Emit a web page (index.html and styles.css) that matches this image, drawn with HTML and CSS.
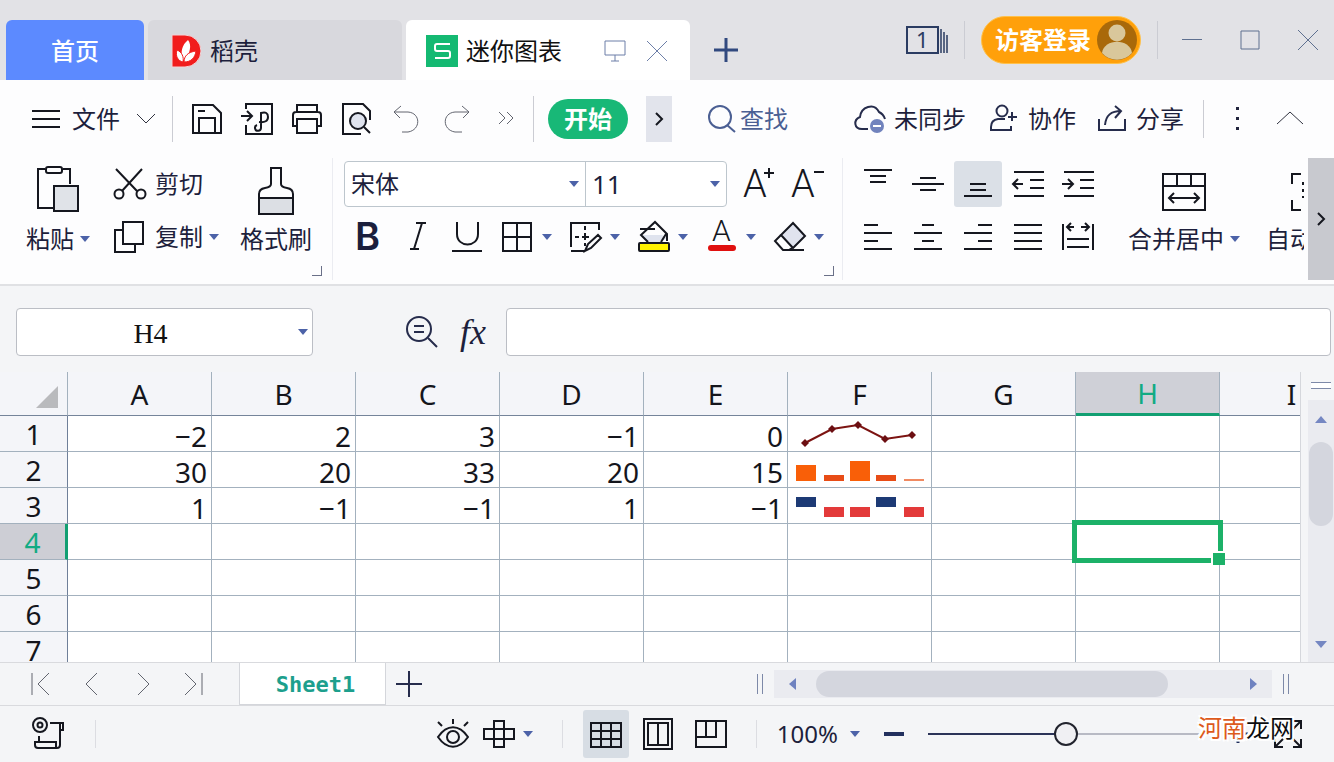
FILE: index.html
```html
<!DOCTYPE html>
<html lang="zh-CN">
<head>
<meta charset="utf-8">
<title>迷你图表</title>
<link rel="stylesheet" href="styles.css">
</head>
<body>
<svg class="defs" aria-hidden="true">
  <symbol id="caret" viewBox="0 0 10 6"><path d="M0 0h10L5 6z" fill="#4c62a8"/></symbol>
</svg>
<div class="app">

<header class="titlebar">
  <nav class="tabs">
    <button class="tab tab-home">首页</button>
    <button class="tab tab-docer">
      <svg width="32" height="34" viewBox="0 0 32 34"><path d="M1 1h13a16 16 0 0 1 0 32H1z" fill="#f11c1c" stroke="#f3d3d6"/><path d="M12 26C9 18 11 11 17 6c4 5 2 13-3 20z" fill="#fff"/><path d="M12 28c-5-1-8-6-6-12 5 2 7 7 6 12zM13 28c0-6 4-10 12-11-1 7-5 11-12 11z" fill="#fff" stroke="#f11c1c"/></svg>
      稻壳</button>
    <button class="tab tab-active">
      <svg width="32" height="32" viewBox="0 0 32 32"><path fill="#14b972" d="M0 0h32v32H0z"/><path d="M24 9H11q-2 0-2 2v3q0 2 2 2h11q2 0 2 2v3q0 2-2 2H9" fill="none" stroke="#fff" stroke-width="2"/></svg>
      <span class="tab-name">迷你图表</span>
      <svg class="line-blue" width="22" height="22" viewBox="0 0 22 22"><path d="M1 1h20v14H1zM11 15v6M7 21h8"/></svg>
      <svg class="line-blue" width="22" height="22" viewBox="0 0 22 22"><path d="M1 1l20 20M21 1L1 21"/></svg>
    </button>
  </nav>
  <button class="new-tab" aria-label="新建"><svg width="24" height="24" viewBox="0 0 24 24"><path d="M12 0v24M0 12h24" stroke="#31497f" stroke-width="3"/></svg></button>
  <div class="window-tools">
    <button class="win-count" aria-label="窗口"><svg width="42" height="28" viewBox="0 0 42 28"><path d="M1 1h31v26H1z" fill="none" stroke="#2b3c62" stroke-width="2"/><path d="M35 3v24M38 6v21M41 9v18" stroke="#2b3c62" stroke-width="1.500"/><text class="svg-num" x="10" y="22">1</text></svg></button>
    <span class="rule"></span>
    <button class="login">访客登录
      <svg width="40" height="40" viewBox="0 0 40 40"><circle cx="20" cy="20" r="20" fill="#a9690a"/><circle cx="20" cy="13" r="8.500" fill="#d9c79b"/><path d="M5 33c2-15 28-15 30 0a20 20 0 0 1-30 0z" fill="#d9c79b"/></svg>
    </button>
    <span class="rule"></span>
    <span class="win-buttons">
      <button aria-label="最小化"><svg class="line-win" width="20" height="20" viewBox="0 0 20 20"><path d="M0 9.500h20"/></svg></button>
      <button aria-label="最大化"><svg class="line-win" width="20" height="20" viewBox="0 0 20 20"><path d="M1 1h18v18H1z"/></svg></button>
      <button aria-label="关闭"><svg class="line-win" width="20" height="20" viewBox="0 0 20 20"><path d="M0 0l20 20M20 0L0 20"/></svg></button>
    </span>
  </div>
</header>

<div class="menubar">
  <button class="file-menu">
    <svg class="ink" width="28" height="20" viewBox="0 0 28 20"><path d="M0 2h28M0 10h28M0 18h28"/></svg>
    文件
    <svg class="thin dark" width="20" height="12" viewBox="0 0 20 12"><path d="M1 1l9 9 9-9"/></svg>
  </button>
  <span class="rule tall"></span>
  <div class="quick">
    <button aria-label="保存"><svg class="ink" width="32" height="32" viewBox="0 0 32 32"><path d="M2 2h20l8 8v20H2zM8 30V15h16v15M7 8h7"/></svg></button>
    <button aria-label="输出为PDF"><svg class="ink" width="32" height="32" viewBox="0 0 32 32"><path d="M5 6V1h26v30H5v-9M0 13h10M6 8l5 5-5 5M16 22a3 3 0 1 0 4 3V10q7-2 7 4t-9 5"/></svg></button>
    <button aria-label="打印"><svg class="ink" width="32" height="32" viewBox="0 0 32 32"><path d="M6 9V2h20v7M6 23H2V12q0-3 3-3h22q3 0 3 3v11h-4M6 16h20v14H6z"/></svg></button>
    <button aria-label="打印预览"><svg class="ink" width="32" height="32" viewBox="0 0 32 32"><circle cx="17" cy="18" r="8" fill="#dfe3ee"/><path d="M20 31H2V1h20l7 7v9M23 24l6 6"/></svg></button>
    <button aria-label="撤销"><svg class="thin" width="32" height="32" viewBox="0 0 32 32"><path d="M10 3L3 9l6 6M3 9h14c13 1 13 18 0 20h-6"/></svg></button>
    <button aria-label="恢复"><svg class="thin" width="32" height="32" viewBox="0 0 32 32"><path d="M21 3l7 6-6 6M28 9H14C1 10 1 27 14 29h7"/></svg></button>
    <button aria-label="更多"><svg class="thin" width="32" height="32" viewBox="0 0 32 32"><path d="M8 9l6 6-6 6M16 9l6 6-6 6"/></svg></button>
  </div>
  <span class="rule tall"></span>
  <button class="start">开始</button>
  <button class="next" aria-label="下一个"><svg class="ink" width="10" height="16" viewBox="0 0 10 16"><path d="M2 2l6 6-6 6"/></svg></button>
  <button class="find"><svg width="28" height="28" viewBox="0 0 28 28" fill="none" stroke="#4b5f93" stroke-width="2"><circle cx="12" cy="12" r="11"/><path d="M19 20l8 7"/></svg>查找</button>
  <div class="share-tools">
    <button class="sync"><svg class="navy" width="32" height="30" viewBox="0 0 32 30"><path d="M14 25H8C0 25-1 16 6 13 7 3 20-2 25 8c4 2 5 4 6 7"/><circle cx="23" cy="22" r="7" fill="#7183bd" stroke="none"/><path d="M19 22h8" stroke="#fff"/></svg>未同步</button>
    <button><svg class="navy" width="28" height="30" viewBox="0 0 28 30"><circle cx="12" cy="7" r="5.500"/><path d="M15 15H8q-7 1-7 8v3h20v-4M18 13h9M22 8v9"/></svg>协作</button>
    <button><svg class="navy" width="28" height="28" viewBox="0 0 28 28"><path d="M1 14v11h26V14M7 20C8 9 14 6 23 6M17 1l6 5-6 7"/></svg>分享</button>
  </div>
  <span class="rule"></span>
  <button class="dots" aria-label="更多选项"><svg width="4" height="24" viewBox="0 0 4 24" fill="#22253d"><path d="M0 0h3v3H0zM0 10h3v3H0zM0 20h3v3H0z"/></svg></button>
  <button class="fold" aria-label="收起"><svg class="thin dark" width="28" height="16" viewBox="0 0 28 16"><path d="M1 13L14 1l13 12"/></svg></button>
</div>

<div class="ribbon">
  <div class="ribbon-body">
    <button class="big">
      <svg class="ink" width="44" height="48" viewBox="0 0 44 48"><path d="M9 4H2v39h16M27 4h7v15"/><rect x="10" y="2" width="16" height="6" rx="2"/><path d="M18 21h24v25H18z" fill="#e0e3e8"/></svg>
      <span class="with-caret">粘贴<svg class="caret"><use href="#caret"/></svg></span>
    </button>
    <div class="rows clip">
      <button class="tool"><svg class="ink" width="34" height="32" viewBox="0 0 34 32"><path d="M3 1l21 22M29 1L9 23"/><circle cx="6" cy="26" r="4.500"/><circle cx="28" cy="26" r="4.500"/></svg>剪切</button>
      <button class="tool"><svg class="ink" width="34" height="34" viewBox="0 0 34 34"><path d="M10 2h20v22H10zM10 10H2v22h20v-8"/></svg><span class="with-caret">复制<svg class="caret"><use href="#caret"/></svg></span></button>
    </div>
    <button class="big brush">
      <svg class="ink" width="38" height="48" viewBox="0 0 38 48"><path d="M2 33h34v16H2z" fill="#dcdfe4"/><path d="M2 33v-4q0-5 6-6 6-1 6-4V3h10v16q0 3 6 4 6 1 6 6v4"/></svg>
      格式刷
    </button>
    <span class="corner"></span>
    <span class="divider"></span>
    <div class="rows font">
      <div class="line">
        <div class="font-box">
          <label class="pick family"><select aria-label="字体"><option>宋体</option></select><svg class="caret"><use href="#caret"/></svg></label>
          <label class="pick size"><select aria-label="字号"><option>11</option></select><svg class="caret"><use href="#caret"/></svg></label>
        </div>
        <button aria-label="增大字号"><svg class="ink" width="32" height="32" viewBox="0 0 32 32"><text class="svg-a" x="0" y="29">A</text><path d="M21 5h10M26 0v10"/></svg></button>
        <button aria-label="减小字号"><svg class="ink" width="32" height="32" viewBox="0 0 32 32"><text class="svg-a" x="0" y="29">A</text><path d="M23 4h10"/></svg></button>
      </div>
      <div class="line formats">
        <button aria-label="加粗"><svg width="32" height="32" viewBox="0 0 32 32"><text class="svg-b" x="3" y="29">B</text></svg></button>
        <button aria-label="倾斜"><svg class="ink" width="32" height="32" viewBox="0 0 32 32"><path d="M14 2h10M8 28h9M20 2l-8 26"/></svg></button>
        <button aria-label="下划线"><svg class="ink" width="32" height="32" viewBox="0 0 32 32"><path d="M5 1v12c0 14 21 14 21 0V1M0 30h30"/></svg></button>
        <button class="combo" aria-label="边框"><svg class="ink" width="32" height="32" viewBox="0 0 32 32"><path d="M1 2h28v28H1zM15 2v28M1 16h28"/></svg><svg class="caret"><use href="#caret"/></svg></button>
        <button class="combo" aria-label="绘图边框"><svg class="ink" width="32" height="32" viewBox="0 0 32 32"><path d="M29 9V2H1v24M1 30h15M5 16h4M12 16h7M15 5v4M15 12v7M15 22v3M15 30l3-7 10-9 3 3-10 10z"/></svg><svg class="caret"><use href="#caret"/></svg></button>
        <button class="combo" aria-label="填充颜色"><svg class="ink" width="32" height="32" viewBox="0 0 32 32"><path d="M9 21h14l6-4-5-3H4z" fill="#dfe3ee" stroke="none"/><path d="M29 20v-7L17 1 3 14l7 7M23 21l5-8M2 8h15"/><rect x="1" y="22" width="30" height="8" rx="1" fill="#fff200"/></svg><svg class="caret"><use href="#caret"/></svg></button>
        <button class="combo" aria-label="字体颜色"><svg width="32" height="32" viewBox="0 0 32 32"><text class="svg-a small" x="6" y="20">A</text><path d="M5 27h22" stroke="#e0100f" stroke-width="6" stroke-linecap="round"/></svg><svg class="caret"><use href="#caret"/></svg></button>
        <button class="combo" aria-label="清除"><svg class="ink" width="32" height="32" viewBox="0 0 32 32"><path d="M19 2l12 13-12 12L7 14z" fill="#e0e3ee"/><path d="M7 14l-6 6 8 9h21M18 27l-3 2"/></svg><svg class="caret"><use href="#caret"/></svg></button>
      </div>
    </div>
    <span class="corner"></span>
    <span class="divider near"></span>
    <div class="aligns">
      <button aria-label="顶端对齐"><svg class="ink" width="32" height="32" viewBox="0 0 32 32"><path d="M2 2h28M8 8h16M8 14h16"/></svg></button>
      <button aria-label="垂直居中"><svg class="ink" width="32" height="32" viewBox="0 0 32 32"><path d="M8 10h16M0 16h32M8 22h16"/></svg></button>
      <button class="on" aria-label="底端对齐"><svg class="ink" width="32" height="32" viewBox="0 0 32 32"><path d="M8 16h16M8 22h16M2 28h28"/></svg></button>
      <button aria-label="减少缩进"><svg class="ink" width="32" height="32" viewBox="0 0 32 32"><path d="M2 4h30M18 12h14M18 20h14M2 28h30M1 16h10M6 11l-5 5 5 5"/></svg></button>
      <button aria-label="增加缩进"><svg class="ink" width="32" height="32" viewBox="0 0 32 32"><path d="M2 4h30M18 12h14M18 20h14M2 28h30M0 16h10M6 11l5 5-5 5"/></svg></button>
      <button aria-label="左对齐"><svg class="ink" width="32" height="32" viewBox="0 0 32 32"><path d="M2 4h14M2 12h28M2 20h14M2 28h28"/></svg></button>
      <button aria-label="水平居中"><svg class="ink" width="32" height="32" viewBox="0 0 32 32"><path d="M10 4h12M2 12h28M10 20h12M2 28h28"/></svg></button>
      <button aria-label="右对齐"><svg class="ink" width="32" height="32" viewBox="0 0 32 32"><path d="M16 4h14M2 12h28M16 20h14M2 28h28"/></svg></button>
      <button aria-label="两端对齐"><svg class="ink" width="32" height="32" viewBox="0 0 32 32"><path d="M2 4h28M2 12h28M2 20h28M2 28h28"/></svg></button>
      <button aria-label="分散对齐"><svg class="ink" width="32" height="32" viewBox="0 0 32 32"><path d="M1 3v26M31 3v26M5 18h22M5 26h22M5 6h7M9 2L5 6l4 4M19 6h8M23 2l4 4-4 4"/></svg></button>
    </div>
    <button class="big merge">
      <svg class="ink" width="44" height="48" viewBox="0 0 44 48"><path d="M1 9h42v36H1zM1 21h42M15 9v12M29 9v12M8 33h28M12 28l-5 5 5 5M32 28l5 5-5 5"/></svg>
      <span class="with-caret">合并居中<svg class="caret"><use href="#caret"/></svg></span>
    </button>
    <button class="big wrap">
      <svg class="ink" width="48" height="48" viewBox="0 0 48 48"><path d="M11 9H2v10M2 35v10h9M37 9h9v10M46 35v10h-9"/><path d="M13 17v16M34 17v16" stroke-dasharray="3 4"/></svg>
      自动换行
    </button>
  </div>
  <button class="ribbon-next" aria-label="向右滚动"><svg class="ink" width="10" height="16" viewBox="0 0 10 16"><path d="M2 2l6 6-6 6"/></svg></button>
</div>

<div class="formula">
  <div class="name-box"><input type="text" value="H4" aria-label="名称框"><svg class="caret"><use href="#caret"/></svg></div>
  <button aria-label="浏览公式"><svg class="navy" width="32" height="34" viewBox="0 0 32 34"><circle cx="13" cy="14" r="12"/><path d="M8 11h10M8 17h10M22 23l9 9"/></svg></button>
  <button class="fx" aria-label="插入函数">fx</button>
  <input class="formula-input" type="text" aria-label="编辑栏">
</div>

<main class="sheet">
  <div class="grid">
    <table>
      <colgroup><col class="col-head"><col><col><col><col><col><col><col><col><col></colgroup>
      <thead>
        <tr><th class="all"><svg width="22" height="22" viewBox="0 0 22 22"><path d="M22 0v22H0z" fill="#b9babd"/></svg></th><th>A</th><th>B</th><th>C</th><th>D</th><th>E</th><th>F</th><th>G</th><th class="picked">H</th><th>I</th></tr>
      </thead>
      <tbody>
        <tr><th>1</th><td>−2</td><td>2</td><td>3</td><td>−1</td><td>0</td>
          <td class="spark"><svg width="134" height="30" viewBox="0 0 134 30"><path d="M13 24l27-14 26-4 27 14 27-4" fill="none" stroke="#7c1412" stroke-width="2"/><path d="M13 20l4 4-4 4-4-4zM40 6l4 4-4 4-4-4zM66 2l4 4-4 4-4-4zM93 16l4 4-4 4-4-4zM120 12l4 4-4 4-4-4z" fill="#6c0f12"/></svg></td><td></td><td></td><td></td></tr>
        <tr><th>2</th><td>30</td><td>20</td><td>33</td><td>20</td><td>15</td>
          <td class="spark"><svg width="134" height="30" viewBox="0 0 134 30"><path d="M4 10h20v16H4zM58 6h20v20H58z" fill="#f95f08"/><path d="M32 20h20v6H32zM84 20h20v6H84z" fill="#e84c16"/><path d="M112 24h20v2h-20z" fill="#f08a62"/></svg></td><td></td><td></td><td></td></tr>
        <tr><th>3</th><td>1</td><td>−1</td><td>−1</td><td>1</td><td>−1</td>
          <td class="spark"><svg width="134" height="30" viewBox="0 0 134 30"><path d="M4 6h20v10H4zM84 6h20v10H84z" fill="#1d3a75"/><path d="M32 16h20v10H32zM58 16h20v10H58zM112 16h20v10h-20z" fill="#e33a3a"/></svg></td><td></td><td></td><td></td></tr>
        <tr><th class="picked">4</th><td></td><td></td><td></td><td></td><td></td><td></td><td></td><td class="current"></td><td></td></tr>
        <tr><th>5</th><td></td><td></td><td></td><td></td><td></td><td></td><td></td><td></td><td></td></tr>
        <tr><th>6</th><td></td><td></td><td></td><td></td><td></td><td></td><td></td><td></td><td></td></tr>
        <tr><th>7</th><td></td><td></td><td></td><td></td><td></td><td></td><td></td><td></td><td></td></tr>
      </tbody>
    </table>
  </div>
  <div class="vscroll">
    <span class="split-h"></span>
    <div class="vtrack">
      <svg width="12" height="7" viewBox="0 0 12 7"><path d="M0 7h12L6 0z" fill="#7587c2"/></svg>
      <span class="vthumb"></span>
      <svg class="down" width="12" height="7" viewBox="0 0 12 7"><path d="M0 0h12L6 7z" fill="#7587c2"/></svg>
    </div>
  </div>
</main>

<div class="sheet-tabs">
  <div class="sheet-nav">
    <button aria-label="第一张"><svg class="thin" width="22" height="26" viewBox="0 0 22 26"><path d="M2 2v22M19 2L8 13l11 11"/></svg></button>
    <button aria-label="上一张"><svg class="thin" width="22" height="26" viewBox="0 0 22 26"><path d="M16 2L5 13l11 11"/></svg></button>
    <button aria-label="下一张"><svg class="thin" width="22" height="26" viewBox="0 0 22 26"><path d="M6 2l11 11L6 24"/></svg></button>
    <button aria-label="最后一张"><svg class="thin" width="22" height="26" viewBox="0 0 22 26"><path d="M2 2l11 11L2 24M19 2v22"/></svg></button>
  </div>
  <button class="sheet-tab">Sheet1</button>
  <button class="add-sheet" aria-label="新建工作表"><svg class="navy" width="26" height="26" viewBox="0 0 26 26"><path d="M13 0v26M0 13h26"/></svg></button>
  <div class="hscroll">
    <span class="split-v"></span>
    <div class="htrack">
      <svg width="7" height="12" viewBox="0 0 7 12"><path d="M7 0v12L0 6z" fill="#6f82c0"/></svg>
      <span class="hthumb"></span>
      <svg width="7" height="12" viewBox="0 0 7 12"><path d="M0 0v12l7-6z" fill="#6f82c0"/></svg>
    </div>
    <span class="split-v"></span>
  </div>
</div>

<footer class="status">
  <button aria-label="宏"><svg class="ink" width="34" height="34" viewBox="0 0 34 34"><circle cx="8" cy="8" r="7"/><circle cx="8" cy="8" r="2.500"/><path d="M18 6h13v7h-3M28 6v22q0 3-3 3H6q-3 0-3-3v-3h21v6M7 25v-6"/></svg></button>
  <span class="rule status-rule"></span>
  <div class="views">
    <button aria-label="护眼模式"><svg class="ink" width="32" height="32" viewBox="0 0 32 32"><path d="M1 19c9-13 21-13 30 0-9 13-21 13-30 0z"/><circle cx="16" cy="19" r="6"/><path d="M16 1v5M1 4l4 4M31 4l-4 4"/></svg></button>
    <button class="combo" aria-label="阅读模式"><svg class="ink" width="32" height="32" viewBox="0 0 32 32"><path d="M11 3h10v26H11zM1 11h30v10H1z"/></svg><svg class="caret"><use href="#caret"/></svg></button>
    <span class="rule"></span>
    <button class="view-on" aria-label="普通视图"><svg class="ink" width="32" height="32" viewBox="0 0 32 32"><path d="M1 5h30v24H1zM1 13h30M1 21h30M11 5v24M21 5v24"/></svg></button>
    <button aria-label="页面布局"><svg class="ink" width="32" height="32" viewBox="0 0 32 32"><path d="M1 1h28v30H1zM5 5h20v22H5zM15 5v22"/></svg></button>
    <button class="view-break" aria-label="分页预览"><svg class="ink" width="32" height="32" viewBox="0 0 32 32"><path d="M1 3h30v26H1zM1 19h20V3M11 3v16"/></svg></button>
    <span class="rule"></span>
    <button class="zoom">100%<svg class="caret"><use href="#caret"/></svg></button>
    <button aria-label="缩小"><svg width="20" height="4" viewBox="0 0 20 4"><path d="M0 0h20v4H0z" fill="#22305e"/></svg></button>
  </div>
  <input class="slider" type="range" min="0" max="100" value="50" aria-label="缩放">
  <div class="status-end">
    <button class="zoom-in" aria-label="放大"><svg width="20" height="20" viewBox="0 0 20 20"><path d="M10 0v19M0 10h20" stroke="#22305e" stroke-width="3"/></svg></button>
    <button aria-label="全屏"><svg class="ink" width="28" height="28" viewBox="0 0 28 28"><path d="M19 1h8v8M27 1l-8 8M9 27H1v-8M1 27l8-8M19 27h8v-8M27 27l-8-8"/></svg></button>
    <span class="mark"><span class="mark-warm">河南</span>龙网</span>
  </div>
</footer>
</div>
</body>
</html>
```
FILE: styles.css
```css
* { box-sizing: border-box; }

body {
  margin: 0;
  background: #f4f5f7;
  color: #1d1f3c;
  font-family: "Noto Sans", "Noto Sans CJK SC", sans-serif;
  font-size: 24px;
  line-height: 32px;
}

button, input, select { font: inherit; color: inherit; }

button {
  display: flex;
  align-items: center;
  justify-content: center;
  flex: none;
  margin: 0;
  padding: 0;
  border: 0;
  background: none;
  white-space: nowrap;
}

svg { display: block; flex: none; overflow: visible; }
.defs { display: none; }
.caret { width: 10px; height: 6px; }
.ink { fill: none; stroke: #15171f; stroke-width: 2; }
.navy { fill: none; stroke: #262c4c; stroke-width: 2; }
.thin { fill: none; stroke: #62656f; stroke-width: 1; }
.dark { stroke: #30323f; }
.line-blue { fill: none; stroke: #6d7fa8; stroke-width: 1; }
.line-win { fill: none; stroke: #5e7090; stroke-width: 1; }
.svg-num { font-size: 22px; fill: #2b3c62; }
.svg-a { font-family: Roboto, sans-serif; font-size: 38px; font-weight: 300; fill: #15171f; stroke: none; }
.small { font-size: 30px; }
.svg-b { font-family: Inter, sans-serif; font-size: 38px; font-weight: 600; fill: #1b1f3c; }

.rule { flex: none; width: 1px; height: 38px; background: #cbccd3; }
.tall { height: 46px; }

.app { display: flex; flex-direction: column; height: 100vh; overflow: hidden; }

/* Title bar */
.titlebar { display: flex; align-items: flex-end; flex: none; height: 80px; padding: 0 16px 0 6px; background: #e2e2e6; }
.tabs { display: flex; gap: 4px; }
.tab { height: 60px; padding-top: 2px; border-radius: 6px 6px 0 0; }
.tab-home { width: 138px; background: #5c8aff; color: #fff; font-weight: 500; }
.tab-docer { width: 254px; padding-left: 23px; gap: 7px; justify-content: flex-start; background: #d8d8dd; }
.tab-active { width: 284px; padding-right: 22px; padding-left: 20px; gap: 8px; background: #fff; color: #111; }
.tab-name { flex: 1; text-align: left; }
.tab-active .line-blue + .line-blue { margin-left: 12px; }
.new-tab { height: 60px; margin-left: 24px; }
.window-tools { display: flex; align-items: center; height: 80px; margin-left: auto; gap: 16px; }
.win-buttons { display: flex; gap: 38px; margin-left: 8px; }
.login { width: 160px; height: 48px; gap: 6px; justify-content: flex-end; padding-right: 3px; border-radius: 24px; border: 1px solid #ffc14a; background: #ffa00a; color: #fff; font-weight: 700; }

/* Menu bar */
.menubar { display: flex; align-items: center; flex: none; height: 78px; padding: 0 30px 0 32px; background: #fdfdfe; }
.file-menu { gap: 12px; margin-right: 16px; }
.file-menu .thin { margin-left: 4px; }
.quick { display: flex; gap: 18px; margin: 0 10px 0 18px; }
.start { width: 80px; height: 40px; margin: 0 18px 0 14px; border-radius: 20px; background: #18b877; color: #fff; font-weight: 700; }
.next { width: 26px; height: 46px; background: #e2e4ec; }
.find { gap: 4px; margin-left: 36px; color: #4b5f93; }
.share-tools { display: flex; gap: 22px; margin: 0 19px 0 auto; }
.share-tools button { gap: 10px; }
.share-tools .sync { gap: 8px; margin-right: 2px; }
.dots { margin-left: 32px; }
.fold { margin-left: 36px; }

/* Ribbon */
.ribbon { display: flex; flex: none; height: 128px; background: #fdfdfe; border-bottom: 2px solid #e0e1e4; }
.ribbon-body { display: flex; flex: 1; min-width: 0; overflow: hidden; margin-right: 4px; padding-left: 26px; }
.ribbon-body > * { flex: none; }
.ribbon-next { width: 26px; height: 122px; background: #c8c9cf; }
.big { flex-direction: column; justify-content: flex-start; gap: 10px; padding-top: 7px; align-self: flex-start; }
.with-caret { display: flex; align-items: center; gap: 6px; }
.rows { display: flex; flex-direction: column; gap: 7px; padding-top: 3px; }
.clip { align-items: flex-start; margin: 0 21px 0 23px; }
.tool { height: 46px; gap: 8px; }
.corner { width: 10px; height: 10px; align-self: flex-end; margin-bottom: 8px; border: solid #6a7088; border-width: 0 1px 1px 0; }
.divider { width: 1px; height: 122px; margin: 0 11px 0 10px; background: #ebecf1; }
.near { margin-left: 8px; }
.line { display: flex; align-items: center; height: 46px; gap: 16px; }
.formats { gap: 18px; padding-left: 8px; }
.combo { gap: 8px; }
.font-box { display: flex; width: 383px; height: 46px; border: 1px solid #bdc6cd; border-radius: 4px; background: #fff; }
.pick { position: relative; display: flex; align-items: center; }
.pick select { width: 100%; height: 44px; padding: 0 6px; border: 0; background: none; appearance: none; }
.pick .caret { position: absolute; right: 6px; pointer-events: none; }
.family { flex: 1; border-right: 1px solid #bdc6cd; }
.size { width: 140px; font-size: 26px; }
.aligns { display: grid; grid-template-columns: repeat(5, 48px); grid-auto-rows: 46px; gap: 7px 2px; align-content: start; padding-top: 3px; }
.aligns .on { background: #dbe0e7; border-radius: 3px; }
.merge, .wrap { margin-left: 26px; }

/* Formula bar */
.formula { display: flex; align-items: center; flex: none; height: 86px; padding: 6px 3px 0 16px; background: #f4f5f7; }
.name-box { position: relative; display: flex; align-items: center; width: 297px; margin-right: 93px; }
.name-box input { width: 100%; height: 48px; padding: 4px 32px 0 4px; border: 1px solid #bbbec5; border-radius: 4px; background: #fff; color: #111; font-family: "Liberation Serif", serif; font-size: 28px; text-align: center; }
.name-box .caret { position: absolute; right: 5px; }
.fx { width: 32px; margin: 0 17px 0 19px; font-family: "Liberation Serif", serif; font-size: 36px; font-style: italic; }
.formula-input { flex: 1; min-width: 0; height: 48px; padding: 0 8px; border: 1px solid #bbbec5; border-radius: 4px; background: #fff; }

/* Sheet */
.sheet { display: flex; flex: 1; min-height: 0; }
.grid { flex: 1; min-width: 0; overflow: hidden; border-right: 1px solid #d5d7dc; background: #fff; }
table { width: 1364px; table-layout: fixed; border-collapse: separate; border-spacing: 0; color: #14151c; font-size: 28px; line-height: 30px; }
col { width: 144px; }
.col-head { width: 68px; }
th { height: 36px; padding: 0; font-weight: 400; background: #f4f5f9; border: solid #a3b1be; border-width: 0 1px 1px 0; }
thead th { height: 44px; border-bottom-color: #75849a; }
tbody th { border-right-color: #6f7f99; }
.all svg { margin: 6px 0 0 36px; }
td { height: 36px; padding: 4px 4px 0 0; text-align: right; border: solid #a3b1be; border-width: 0 1px 1px 0; }
td.spark { padding: 0 0 0 4px; }
thead .picked { background: #cfd0d7; color: #12ab83; border-bottom: 3px solid #129f72; }
tbody .picked { background: #cdced5; color: #12ab83; border-right: 3px solid #129f72; }
.current { position: relative; }
.current::before { content: ""; position: absolute; inset: -4px; border: 5px solid #1cb168; }
.current::after { content: ""; position: absolute; right: -6px; bottom: -6px; width: 12px; height: 12px; background: #1cb168; border: solid #fff; border-width: 2px 0 0 2px; }

.vscroll { display: flex; flex-direction: column; flex: none; width: 26px; margin-left: 7px; }
.split-h { width: 20px; height: 7px; margin: 10px 3px 11px; border: solid #7d89a8; border-width: 1px 0; background: #fff; }
.vtrack { display: flex; flex-direction: column; align-items: center; flex: 1; padding: 16px 0 14px; background: #eaebf0; }
.vthumb { width: 24px; height: 84px; margin-top: 19px; border-radius: 12px; background: #d4d6de; }
.down { margin-top: auto; }

/* Sheet tabs */
.sheet-tabs { display: flex; align-items: center; flex: none; height: 44px; padding-right: 45px; border: solid #d9dade; border-width: 1px 0; background: #f4f5f7; }
.sheet-nav { display: flex; gap: 29px; width: 239px; padding-left: 30px; }
.sheet-tab { width: 147px; height: 42px; padding: 3px 0 0 6px; background: #fff; border: solid #d4d6db; border-width: 0 1px 1px; color: #1d9f8d; font-family: "DejaVu Sans Mono", monospace; font-size: 22px; font-weight: 700; }
.add-sheet { margin-left: 10px; }
.hscroll { display: flex; align-items: center; flex: 0 0 532px; gap: 11px; margin-left: auto; }
.split-v { width: 6px; height: 20px; border: solid #7d89a8; border-width: 0 1px; }
.htrack { display: flex; align-items: center; flex: 1; height: 28px; padding: 0 15px; background: #eaebf0; }
.hthumb { width: 352px; height: 26px; margin: 0 auto 0 20px; border-radius: 13px; background: #d4d6de; }

/* Status bar */
.status { display: flex; align-items: center; flex: none; height: 56px; padding: 0 32px; background: #f4f5f7; }
.status .rule { height: 28px; background: #dcdde2; }
.status-rule { margin-left: 29px; }
.views { display: flex; align-items: center; gap: 14px; margin-left: auto; }
.views .rule { margin: 0 6px 0 15px; }
.views .view-break { margin-left: 6px; }
.view-on { width: 46px; height: 48px; background: #d7dde4; border-radius: 3px; }
.zoom { gap: 12px; }
.views .zoom + button { margin: 0 24px 0 10px; }
.slider { appearance: none; flex: none; width: 276px; height: 24px; margin: 0; background: linear-gradient(90deg, #2b3358 50%, #b8bac4 50%) center / 100% 2px no-repeat; }
.slider::-webkit-slider-thumb { appearance: none; width: 24px; height: 24px; border: 2px solid #22242e; border-radius: 50%; background: #f0f0f3; }
.status-end { position: relative; display: flex; align-items: center; gap: 26px; margin-left: 24px; }
.zoom-in { width: 20px; }
.mark { position: absolute; right: 8px; top: -8px; color: #0d0d0f; text-shadow: 1px 0 #fff, -1px 0 #fff, 0 1px #fff, 0 -1px #fff, 2px 2px #fff, -2px -2px #fff, 2px -2px #fff, -2px 2px #fff; white-space: nowrap; }
.mark-warm { color: #dd5a1c; }
```
